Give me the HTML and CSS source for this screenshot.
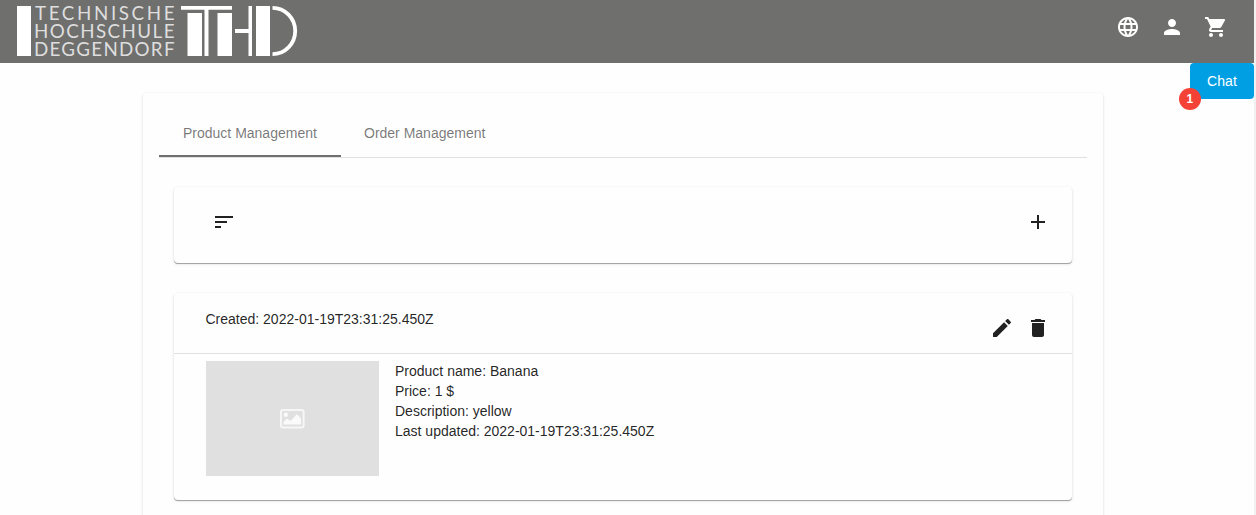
FILE: index.html
```html
<!DOCTYPE html>
<html lang="en">
<head>
<meta charset="utf-8">
<title>Product Management</title>
<link rel="stylesheet" href="styles.css">
</head>
<body>
<div class="page">
  <header class="topbar">
    <svg class="logo" width="284" height="52" viewBox="16 5 284 52">
      <rect x="17" y="6" width="14" height="50"/>
      <g class="logo-text">
        <text x="35" y="19.800" textLength="139.500">TECHNISCHE</text>
        <text x="34" y="37.800" textLength="140.500">HOCHSCHULE</text>
        <text x="34" y="55.800" textLength="140.500">DEGGENDORF</text>
      </g>
      <path d="M181 6h51v3.700h-23.500V56h-4V9.700H181zM187.500 13H202v43h-14.500zM217.500 13H232v43h-14.500zM235 29h13.500V6h3.500v50h-3.500V33H235zM256 6h14v50h-14z"/>
      <path class="logo-arc" d="M272.500 7.900c12.500 0 22.700 10.300 22.700 23.100s-10.200 23.100-22.700 23.100"/>
    </svg>
    <nav class="actions">
      <svg class="icon" viewBox="0 0 24 24"><path d="M11.99 2C6.47 2 2 6.48 2 12s4.47 10 9.99 10C17.52 22 22 17.52 22 12S17.52 2 11.99 2zm6.93 6h-2.95c-.32-1.25-.78-2.45-1.38-3.56 1.84.63 3.37 1.91 4.33 3.56zM12 4.04c.83 1.2 1.48 2.53 1.91 3.96h-3.82c.43-1.43 1.08-2.76 1.91-3.96zM4.26 14C4.1 13.36 4 12.69 4 12s.1-1.36.26-2h3.38c-.08.66-.14 1.32-.14 2 0 .68.06 1.34.14 2H4.26zm.82 2h2.95c.32 1.25.78 2.45 1.38 3.56-1.84-.63-3.37-1.9-4.33-3.56zm2.95-8H5.08c.96-1.66 2.49-2.93 4.33-3.56C8.81 5.55 8.35 6.75 8.03 8zM12 19.96c-.83-1.2-1.48-2.53-1.91-3.96h3.82c-.43 1.43-1.08 2.76-1.91 3.96zM14.34 14H9.66c-.09-.66-.16-1.32-.16-2 0-.68.07-1.35.16-2h4.68c.09.65.16 1.32.16 2 0 .68-.07 1.34-.16 2zm.25 5.56c.6-1.11 1.06-2.31 1.38-3.56h2.95c-.96 1.65-2.49 2.93-4.33 3.56zM16.36 14c.08-.66.14-1.32.14-2 0-.68-.06-1.34-.14-2h3.38c.16.64.26 1.31.26 2s-.1 1.36-.26 2h-3.38z"/></svg>
      <svg class="icon" viewBox="0 0 24 24"><path d="M12 12c2.21 0 4-1.79 4-4s-1.79-4-4-4-4 1.79-4 4 1.79 4 4 4zm0 2c-2.67 0-8 1.34-8 4v2h16v-2c0-2.66-5.33-4-8-4z"/></svg>
      <svg class="icon" viewBox="0 0 24 24"><path d="M7 18c-1.1 0-1.99.9-1.99 2S5.900 22 7 22s2-.9 2-2-.9-2-2-2zM1 2v2h2l3.600 7.590-1.350 2.450c-.16.28-.25.61-.25.960 0 1.100.9 2 2 2h12v-2H7.420c-.14 0-.25-.11-.25-.25l.03-.12.9-1.630h7.450c.75 0 1.410-.41 1.750-1.030l3.580-6.490c.08-.14.12-.31.12-.48 0-.55-.45-1-1-1H5.210l-.94-2H1zm16 16c-1.100 0-1.990.9-1.990 2s.89 2 1.990 2 2-.9 2-2-.9-2-2-2z"/></svg>
    </nav>
    <button class="chat">Chat<span class="badge">1</span></button>
  </header>
  <main class="panel">
    <div class="tabs">
      <div class="tab tab-active">Product Management</div>
      <div class="tab">Order Management</div>
    </div>
    <section class="card toolbar">
      <svg class="icon" viewBox="0 0 24 24"><path d="M3 18h6v-2H3v2zM3 6v2h18V6H3zm0 7h12v-2H3v2z"/></svg>
      <svg class="icon" viewBox="0 0 24 24"><path d="M19 13h-6v6h-2v-6H5v-2h6V5h2v6h6v2z"/></svg>
    </section>
    <section class="card product">
      <div class="product-head">
        <span>Created: 2022-01-19T23:31:25.450Z</span>
        <div class="product-actions">
          <svg class="icon" viewBox="0 0 24 24"><path d="M3 17.250V21h3.750L17.810 9.940l-3.750-3.750L3 17.250zM20.710 7.040c.39-.39.39-1.020 0-1.410l-2.340-2.340c-.39-.39-1.020-.39-1.410 0l-1.830 1.830 3.750 3.750 1.830-1.830z"/></svg>
          <svg class="icon" viewBox="0 0 24 24"><path d="M6 19c0 1.100.9 2 2 2h8c1.100 0 2-.9 2-2V7H6v12zM19 4h-3.500l-1-1h-5l-1 1H5v2h14V4z"/></svg>
        </div>
      </div>
      <div class="product-body">
        <div class="thumb">
          <svg width="25" height="20" viewBox="0 0 25 20"><rect class="frame" x="1" y="1" width="22.600" height="17.600" rx="2"/><circle cx="5.800" cy="5.800" r="2.200"/><path d="M3.500 15.500V13L7 9.500l3.500 2.500L17 5l4 4.500v6z"/></svg>
        </div>
        <div class="details">
          <div>Product name: Banana</div>
          <div>Price: 1 $</div>
          <div>Description: yellow</div>
          <div>Last updated: 2022-01-19T23:31:25.450Z</div>
        </div>
      </div>
    </section>
  </main>
</div>
</body>
</html>
```
FILE: styles.css
```css
* { box-sizing: border-box; }
body {
  margin: 0;
  height: 515px;
  overflow: hidden;
  background: #f1f1f1;
  color: rgba(0, 0, 0, 0.87);
  font: 14px/20px "Liberation Sans", Arial, sans-serif;
}
.page { width: 1254px; height: 515px; background: #fefefe; overflow: hidden; }
.topbar {
  position: relative;
  display: flex;
  justify-content: space-between;
  align-items: flex-start;
  height: 63px;
  padding: 5px 26px 0 16px;
  background: #6f6f6e;
}
.logo { fill: #fff; overflow: visible; }
.logo-text { font: 400 18.8px Lato, sans-serif; fill: #dedede; }
.logo-arc { fill: none; stroke: #fff; stroke-width: 3.8; }
.icon { display: block; width: 24px; height: 24px; fill: currentColor; }
.actions { display: flex; gap: 20px; padding-top: 10px; color: #fff; }
.chat {
  position: absolute;
  top: 63px;
  right: 0;
  width: 64px;
  height: 36px;
  padding: 0;
  border: 0;
  border-radius: 4px;
  background: #009fe3;
  color: #fff;
  font: inherit;
  letter-spacing: 0.15px;
}
.badge {
  position: absolute;
  left: -11px;
  top: 25px;
  width: 22px;
  height: 22px;
  border-radius: 50%;
  background: #f44336;
  font: bold 12px/22px "Liberation Sans", sans-serif;
}
.panel {
  width: 960px;
  height: 500px;
  margin: 30px 0 0 143px;
  padding: 16px;
  border-radius: 4px;
  background: #fefefe;
  box-shadow: 0 1px 3px rgba(0, 0, 0, 0.16);
}
.tabs { display: flex; height: 49px; border-bottom: 1px solid #e0e0e0; }
.tab {
  height: 48px;
  padding: 14px 23px 0;
  color: rgba(0, 0, 0, 0.54);
  white-space: nowrap;
}
.tab-active { width: 182px; padding-left: 24px; border-bottom: 2px solid #6f6f6e; }
.card {
  margin: 29px 15px 0;
  border-radius: 4px;
  box-shadow: 0 1px 0 #a5a5a5, 0 1px 3px rgba(0, 0, 0, 0.16);
}
.toolbar {
  display: flex;
  justify-content: space-between;
  height: 76px;
  padding: 23px 22.5px 0 37.5px;
}
.product { height: 207px; margin-top: 30px; }
.product-head {
  display: flex;
  justify-content: space-between;
  height: 61px;
  padding: 16px 22.5px 0 31.5px;
  border-bottom: 1px solid #e0e0e0;
}
.product-actions { display: flex; gap: 12px; padding-top: 7px; }
.product-body { display: flex; gap: 16px; padding: 7px 32px; }
.thumb {
  display: grid;
  place-items: center;
  width: 173px;
  height: 115px;
  background: #e0e0e0;
  fill: #fafafa;
}
.frame { fill: none; stroke: #f6f6f6; stroke-width: 2; }
```
